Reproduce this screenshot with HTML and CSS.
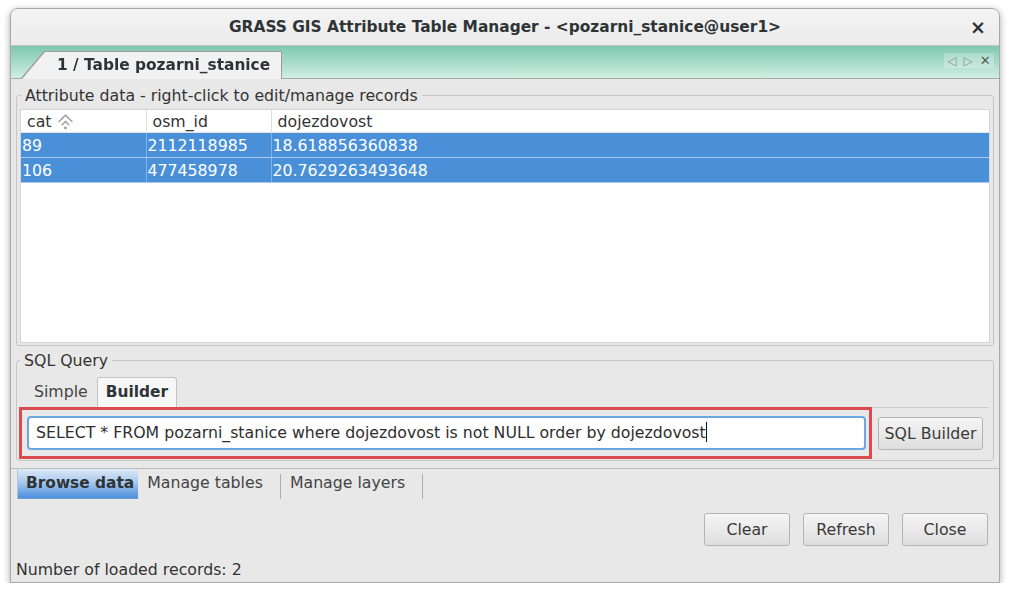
FILE: index.html
```html
<!DOCTYPE html>
<html lang="en">
<head>
    <meta charset="UTF-8">
    <title>GRASS GIS Attribute Table Manager</title>
    <link rel="stylesheet" href="styles.css">
</head>
<body>
    <div class="window">
        <div class="titlebar">
            <span></span>
            <span class="title">GRASS GIS Attribute Table Manager - &lt;pozarni_stanice@user1&gt;</span>
            <span class="close">&#215;</span>
        </div>

        <div class="layer-strip">
            <div class="layer-tab-wrap">
                <div class="layer-tab">1 / Table pozarni_stanice</div>
            </div>
            <div class="strip-nav"><span>&#9665;</span><span>&#9655;</span><span>&#10005;</span></div>
        </div>

        <div class="content">
            <div class="page">
                <fieldset class="group">
                    <legend>Attribute data - right-click to edit/manage records</legend>
                    <div class="list">
                        <table class="grid">
                            <colgroup><col class="c1"><col class="c2"><col></colgroup>
                            <thead>
                                <tr>
                                    <th>cat <svg class="sort-icon" width="17" height="17" viewBox="0 0 16 16"><path d="M1.5 8.5 8 2l6.5 6.5M4.5 11.5 8 8l3.5 3.5" fill="none" stroke="#a3a3a3" stroke-width="1.5"/><circle cx="8" cy="14" r="1.4" fill="#a3a3a3"/></svg></th>
                                    <th>osm_id</th>
                                    <th>dojezdovost</th>
                                </tr>
                            </thead>
                            <tbody>
                                <tr><td>89</td><td>2112118985</td><td>18.618856360838</td></tr>
                                <tr><td>106</td><td>477458978</td><td>20.7629263493648</td></tr>
                            </tbody>
                        </table>
                    </div>
                </fieldset>

                <fieldset class="group sql-group">
                    <legend>SQL Query</legend>
                    <div class="sql-tabs">
                        <span class="sql-tab">Simple</span>
                        <span class="sql-tab active">Builder</span>
                    </div>
                    <div class="sql-row">
                        <div class="highlight">
                            <div class="sql-input">SELECT * FROM pozarni_stanice where dojezdovost is not NULL order by dojezdovost<span class="caret"></span></div>
                        </div>
                        <button class="btn sql-btn">SQL Builder</button>
                    </div>
                </fieldset>
            </div>

            <div class="page-tabs">
                <span class="page-tab active">Browse data</span>
                <span class="page-tab">Manage tables</span>
                <span class="page-tab">Manage layers</span>
            </div>

            <div class="actions">
                <button class="btn">Clear</button>
                <button class="btn">Refresh</button>
                <button class="btn">Close</button>
            </div>

            <div class="status">Number of loaded records: 2</div>
        </div>
    </div>
</body>
</html>
```

FILE: styles.css
```css
body, html {
    margin: 0;
    padding: 0;
    background-color: #ffffff;
    font-family: 'DejaVu Sans', sans-serif;
    font-size: 15.75px;
    color: #333;
}
.window {
    margin: 8px 0 0 10px;
    width: 988px;
    border: 1px solid #a8a8a8;
    border-radius: 8px 8px 0 0;
    box-shadow: 0 2px 7px rgba(0, 0, 0, 0.35);
    background-color: #e8e8e8;
    overflow: hidden;
}
.titlebar {
    height: 36px;
    display: grid;
    grid-template-columns: 1fr auto 1fr;
    align-items: center;
    background: linear-gradient(#f3f3f3, #ececec);
    border-bottom: 1px solid #c4c4c4;
}
.title {
    font-weight: bold;
    font-size: 15.4px;
    color: #2e3436;
}
.close {
    justify-self: end;
    margin-right: 13px;
    font-weight: bold;
    font-size: 19px;
    color: #2e3436;
}
.layer-strip {
    height: 32px;
    display: flex;
    align-items: flex-end;
    background: linear-gradient(#7ec8af, #d1eee3);
    border-bottom: 1px solid #a9a9a9;
}
.layer-tab-wrap {
    margin-left: 11px;
    margin-bottom: -1px;
    filter: drop-shadow(-1px 0 0 #9c9c9c) drop-shadow(1px 0 0 #9c9c9c) drop-shadow(0 -1px 0 #9c9c9c);
}
.layer-tab {
    height: 27px;
    line-height: 27px;
    padding: 0 11px 0 35px;
    background-color: #f2f2f2;
    font-weight: bold;
    font-size: 15.4px;
    color: #2e3436;
    clip-path: polygon(0 100%, 23px 0, 100% 0, 100% 100%);
}
.strip-nav {
    margin-left: auto;
    margin-right: 5px;
    align-self: flex-start;
    margin-top: 7px;
    width: 50px;
    height: 15px;
    display: flex;
    justify-content: space-around;
    align-items: center;
    background-color: rgba(255, 255, 255, 0.25);
    font-size: 12px;
    color: #84968f;
}
.strip-nav span:last-child {
    color: #55605c;
    font-size: 13px;
}
.page {
    padding: 7px 5px 7px 5px;
}
.group {
    margin: 0;
    min-width: 0;
    border: 1px solid #c6c6c6;
    border-radius: 3px;
    padding: 4px 3px 2px 3px;
}
.group legend {
    margin-left: 1px;
    padding: 0 4px;
    line-height: 19px;
    color: #333;
}
.list {
    height: 232px;
    border: 1px solid #d4d4d4;
    background-color: #ffffff;
}
.grid {
    width: 100%;
    border-collapse: collapse;
    table-layout: fixed;
}
.grid .c1, .grid .c2 {
    width: 125px;
}
.grid th {
    height: 22px;
    padding: 0 6px;
    text-align: left;
    font-weight: normal;
    color: #333;
    border-right: 1px solid #e0e0e0;
    border-bottom: 1px solid #e4e4e4;
    white-space: nowrap;
}
.grid th:last-child {
    border-right: none;
}
.sort-icon {
    vertical-align: -3px;
    margin-left: 0;
}
.grid td {
    height: 24px;
    padding: 0 1px;
    background-color: #4a90d9;
    color: #ffffff;
    border-right: 1px solid #86b3e6;
    border-bottom: 1px solid #a9c8ec;
}
.grid td:last-child {
    border-right: none;
}
.sql-group {
    margin-top: 5px;
    padding: 7px 4px 1px 2px;
}
.sql-tabs {
    height: 30px;
    display: flex;
    align-items: flex-end;
    padding-left: 7px;
    border-bottom: 1px solid #cbcbcb;
}
.sql-tab {
    height: 29px;
    line-height: 28px;
    padding: 0 9px 0 8px;
    color: #444;
}
.sql-tab.active {
    height: 29px;
    padding: 0 8px;
    margin-bottom: -1px;
    background-color: #f7f7f7;
    border: 1px solid #c2c2c2;
    border-bottom: 1px solid #f7f7f7;
    border-radius: 3px 3px 0 0;
    font-weight: bold;
    font-size: 15.4px;
    color: #2e3436;
}
.sql-row {
    display: flex;
    align-items: center;
    margin-top: -1px;
    padding-right: 6px;
}
.highlight {
    flex: 1;
    border: 3px solid #da4a4e;
    padding: 6px 3px 6px 5px;
}
.sql-input {
    height: 34px;
    box-sizing: border-box;
    border: 2px solid #6ea7df;
    border-radius: 4px;
    background-color: #ffffff;
    padding-left: 7px;
    line-height: 30px;
    color: #2e2e2e;
    white-space: nowrap;
}
.caret {
    display: inline-block;
    width: 1px;
    height: 20px;
    background-color: #111;
    vertical-align: -4px;
}
.btn {
    height: 33px;
    width: 86px;
    border: 1px solid #b4b4b4;
    border-radius: 3px;
    background: linear-gradient(#f5f5f5, #dedede);
    font-family: 'DejaVu Sans', sans-serif;
    font-size: 15.75px;
    color: #3a3a3a;
    padding: 0;
}
.sql-btn {
    width: 105px;
    margin-left: 6px;
}
.page-tabs {
    height: 30px;
    display: flex;
    border-top: 1px solid #bdbdbd;
    padding-left: 6px;
}
.page-tab {
    position: relative;
    line-height: 27px;
    padding: 0 18px 0 9px;
    color: #444;
}
.page-tab::after {
    content: "";
    position: absolute;
    right: 0;
    top: 5px;
    bottom: 0;
    border-right: 1px solid #acacac;
}
.page-tab.active {
    padding: 0 4px 0 8px;
    line-height: 28px;
    height: 29px;
    font-weight: bold;
    font-size: 15.4px;
    color: #2e3436;
    background: linear-gradient(#dce8f6, #a9c9ee 45%, #4b8fdc);
    border-left: 1px solid #b0c4dc;
    border-bottom: 1px solid #6a9bd3;
}
.page-tab.active::after {
    display: none;
}
.actions {
    display: flex;
    justify-content: flex-end;
    gap: 13px;
    padding: 14px 11px 0 0;
}
.status {
    padding: 14px 0 2px 5px;
    line-height: 20px;
    color: #333;
}
```
